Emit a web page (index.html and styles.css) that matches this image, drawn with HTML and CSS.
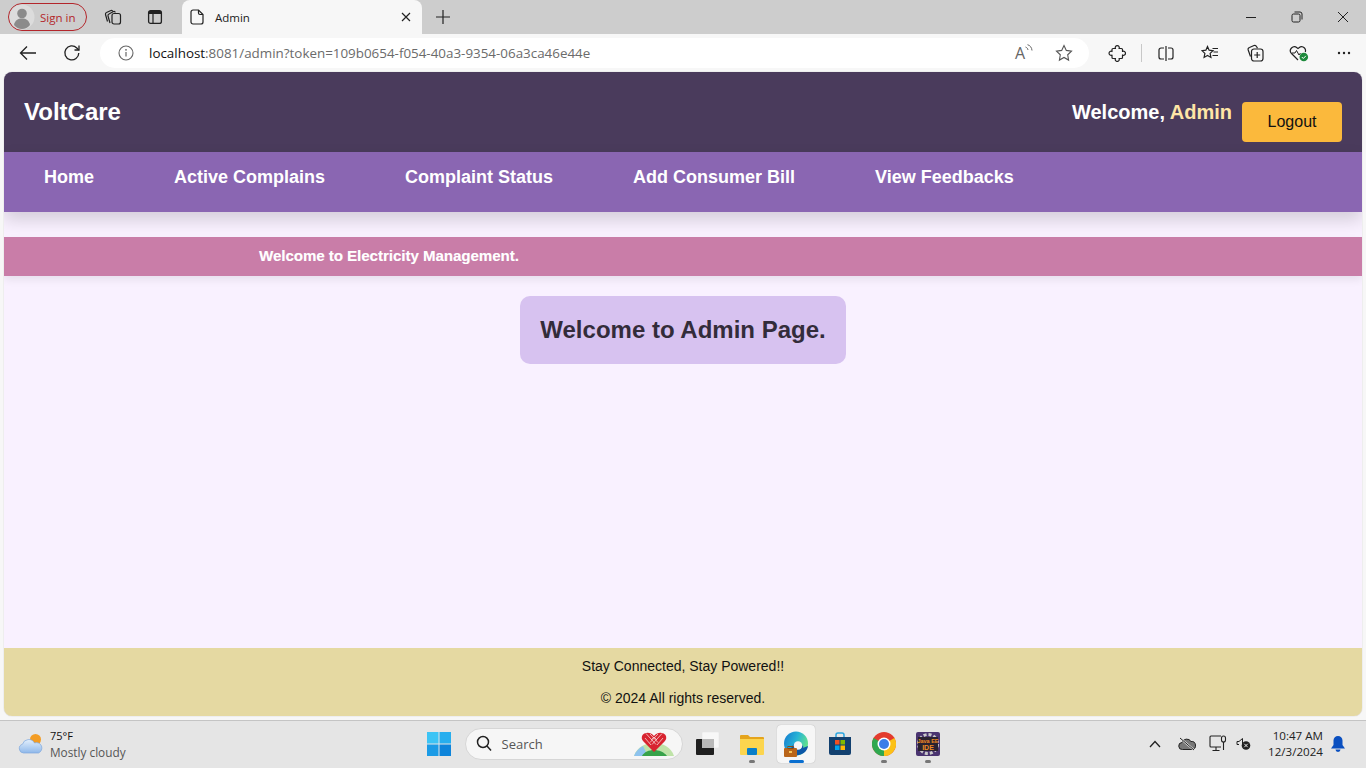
FILE: index.html
```html
<!DOCTYPE html>
<html lang="en">
<head>
  <meta charset="UTF-8" />
  <title>Admin</title>
  <link rel="stylesheet" href="styles.css">
</head>
<body>
  <div class="tabstrip">
    <div class="signin">
      <span class="avatar">
        <svg width="26" height="26" viewBox="0 0 26 26"><circle cx="13" cy="13" r="12.500" fill="#dcdcdc"/><circle cx="13" cy="9.500" r="4.800" fill="#8b8b8b"/><path d="M5 21c1-5 4-6.500 8-6.500s7 1.500 8 6.500c-2 2.500-5 4-8 4s-6-1.500-8-4z" fill="#8b8b8b"/></svg>
      </span>
      <span class="signin-text">Sign in</span>
    </div>
    <button class="strip-btn">
      <svg width="18" height="18" viewBox="0 0 18 18" fill="none" stroke="#222" stroke-width="1.200"><path d="M3.500 13.500 1.500 6.500q-.3-1.500 1-2L7 2.500q1.300-.4 1.800 1"/><path d="M6 15 4 8q-.3-1.500 1-2l4.500-2.500q1.300-.5 1.800 1"/><rect x="8" y="5.500" width="8.500" height="10.500" rx="2"/></svg>
    </button>
    <button class="strip-btn">
      <svg width="16" height="16" viewBox="0 0 16 16"><rect x="1.600" y="1.600" width="12.800" height="12.800" rx="2" fill="none" stroke="#222" stroke-width="1.300"/><path d="M2 2h12v3H2z" fill="#222"/><path d="M6 5v9" stroke="#222" stroke-width="1.200"/></svg>
    </button>
    <div class="tab">
      <svg width="14" height="16" viewBox="0 0 14 16" fill="none" stroke="#222" stroke-width="1.200"><path d="M3 1h5.500L13 5.500V13a2 2 0 0 1-2 2H3a2 2 0 0 1-2-2V3a2 2 0 0 1 2-2z"/><path d="M8.500 1v3A1.500 1.500 0 0 0 10 5.500h3"/></svg>
      <span class="tab-title">Admin</span>
      <svg class="tab-close" width="10" height="10" viewBox="0 0 10 10" stroke="#222" stroke-width="1.200"><path d="M1 1l8 8M9 1 1 9"/></svg>
    </div>
    <button class="strip-btn new-tab">
      <svg width="16" height="16" viewBox="0 0 16 16" stroke="#222" stroke-width="1.200"><path d="M8 1v14M1 8h14"/></svg>
    </button>
    <div class="win-btns">
      <svg width="12" height="12" viewBox="0 0 12 12" stroke="#222" stroke-width="1"><path d="M1 6.500h10"/></svg>
      <svg width="12" height="12" viewBox="0 0 12 12" fill="none" stroke="#222" stroke-width="1"><rect x="1" y="3" width="8" height="8" rx="1.500"/><path d="M3.500 1h5.500a2 2 0 0 1 2 2v5.500"/></svg>
      <svg width="12" height="12" viewBox="0 0 12 12" stroke="#222" stroke-width="1"><path d="M1 1l10 10M11 1 1 11"/></svg>
    </div>
  </div>

  <div class="toolbar">
    <button class="tool-btn back">
      <svg width="18" height="16" viewBox="0 0 18 16" fill="none" stroke="#222" stroke-width="1.300"><path d="M17 8H1.500M8 1.500 1.500 8 8 14.500"/></svg>
    </button>
    <button class="tool-btn reload">
      <svg width="18" height="18" viewBox="0 0 18 18" fill="none" stroke="#222" stroke-width="1.300"><path d="M15.800 9a7 7 0 1 1-2-5l2 2"/><path d="M16 1.500V6h-4.500"/></svg>
    </button>
    <div class="addressbar">
      <svg class="info" width="16" height="16" viewBox="0 0 16 16"><circle cx="8" cy="8" r="7" fill="none" stroke="#666" stroke-width="1.100"/><path d="M8 7v4.500" stroke="#666" stroke-width="1.200"/><circle cx="8" cy="4.800" r=".9" fill="#666"/></svg>
      <span class="url"><span class="url-host">localhost</span>:8081/admin?token=109b0654-f054-40a3-9354-06a3ca46e44e</span>
      <span class="read-aloud">
        <span class="read-a">A</span>
        <svg width="8" height="10" viewBox="0 0 8 10" fill="none" stroke="#666" stroke-width="1"><path d="M.5 3c1.500.5 2.300 1.700 2.500 3M2.500 .7C5 1.300 6.800 3.500 7 6.500"/></svg>
      </span>
      <svg class="star" width="18" height="18" viewBox="0 0 18 18" fill="none" stroke="#555" stroke-width="1.100"><path d="M9 1.500l2.300 4.900 5.200.7-3.800 3.700.9 5.300L9 13.500l-4.600 2.600.9-5.300L1.500 7.100l5.200-.7z"/></svg>
    </div>
    <div class="tool-icons">
      <span class="tool-slot">
        <svg width="18" height="18" viewBox="-1 -1 18 18" fill="none" stroke="#222" stroke-width="1.200" stroke-linejoin="round"><path d="M6.500 3.500A2 2 0 1 1 10 3.500H12.500a1 1 0 0 1 1 1V6.500A2 2 0 1 1 13.500 10V12.500a1 1 0 0 1-1 1H10A2 2 0 1 1 6.500 13.500H4a1 1 0 0 1-1-1V10A2 2 0 1 1 3 6.500V4.500a1 1 0 0 1 1-1z"/></svg>
      </span>
      <span class="tool-sep"></span>
      <span class="tool-slot">
        <svg width="16" height="15" viewBox="0 0 16 15" fill="none" stroke="#222" stroke-width="1.200"><path d="M6 2H3a2 2 0 0 0-2 2v7a2 2 0 0 0 2 2h3M10 2h3a2 2 0 0 1 2 2v7a2 2 0 0 1-2 2h-3M8 0v15"/></svg>
      </span>
      <span class="tool-slot">
        <svg width="18" height="16" viewBox="0 0 18 16" fill="none" stroke="#222" stroke-width="1.200"><path d="M6.500 1.500l1.600 3.700 3.900.5-2.900 2.700.8 4-3.400-2-3.400 2 .8-4L1 5.700l3.900-.5zM11.500 3.500H17M12.500 7H17M11.500 10.500H17"/></svg>
      </span>
      <span class="tool-slot">
        <svg width="18" height="18" viewBox="0 0 18 18" fill="none" stroke="#222" stroke-width="1.200"><path d="M4.500 12.500 2.200 6a2 2 0 0 1 1.300-2.500l4.500-2a2 2 0 0 1 2.500 1l1 1.800"/><rect x="5.500" y="5" width="11.500" height="12" rx="2.500"/><path d="M11.200 8v6M8.200 11h6"/></svg>
      </span>
      <span class="tool-slot">
        <svg width="20" height="18" viewBox="0 0 20 18"><path d="M9 16 2.500 9.500a4 4 0 0 1 0-5.500 4 4 0 0 1 5.500-.3L9 4.500l1-.8a4 4 0 0 1 5.500.3 4 4 0 0 1 .8 4" fill="none" stroke="#222" stroke-width="1.200"/><path d="M3 9h3l1.500-2.500L10 11l1.500-2" fill="none" stroke="#222" stroke-width="1"/><circle cx="14.800" cy="13" r="4.300" fill="#1e8a3c"/><path d="M12.800 13l1.500 1.500 2.500-2.600" fill="none" stroke="#fff" stroke-width="1"/></svg>
      </span>
      <span class="tool-slot">
        <svg width="14" height="4" viewBox="0 0 14 4" fill="#222"><circle cx="2" cy="2" r="1.200"/><circle cx="7" cy="2" r="1.200"/><circle cx="12" cy="2" r="1.200"/></svg>
      </span>
    </div>
  </div>

  <div class="viewport">
    <div class="app">
      <header class="topbar">
        <div class="brand">VoltCare</div>
        <div class="userbox">
          <span class="welcome">Welcome, <span class="username">Admin</span></span>
          <button class="logout">Logout</button>
        </div>
      </header>
      <nav class="navbar">
        <a href="#">Home</a>
        <a href="#">Active Complains</a>
        <a href="#">Complaint Status</a>
        <a href="#">Add Consumer Bill</a>
        <a href="#">View Feedbacks</a>
      </nav>
      <div class="ticker"><span>Welcome to Electricity Management.</span></div>
      <main class="content">
        <h2 class="greeting">Welcome to Admin Page.</h2>
      </main>
      <footer class="footer">
        <p>Stay Connected, Stay Powered!!</p>
        <p>&copy; 2024 All rights reserved.</p>
      </footer>
    </div>
  </div>

  <div class="taskbar">
    <div class="weather">
      <svg width="26" height="22" viewBox="0 0 26 22">
        <defs><linearGradient id="cloud" x1="0" y1="0" x2="0" y2="1"><stop offset="0" stop-color="#e3effc"/><stop offset="1" stop-color="#8fb8ea"/></linearGradient></defs>
        <circle cx="17.500" cy="6.500" r="5.500" fill="#f39c23"/>
        <path d="M5.500 20a4.500 4.500 0 0 1-1-8.800A6.500 6.500 0 0 1 16.500 10a5 5 0 0 1 4 10z" fill="url(#cloud)" stroke="#7ea8dc" stroke-width=".7"/>
      </svg>
      <div class="weather-text">
        <div class="temp">75°F</div>
        <div class="cond">Mostly cloudy</div>
      </div>
    </div>
    <div class="task-center">
      <svg class="win-logo" width="24" height="24" viewBox="0 0 24 24"><rect width="11.500" height="11.500" fill="#3cc4f5"/><rect x="12.500" width="11.500" height="11.500" fill="#27aeee"/><rect y="12.500" width="11.500" height="11.500" fill="#1b9be6"/><rect x="12.500" y="12.500" width="11.500" height="11.500" fill="#0e84da"/></svg>
      <div class="searchbox">
        <svg width="16" height="17" viewBox="0 0 16 17" fill="none" stroke="#222" stroke-width="1.500"><circle cx="7" cy="7" r="5.500"/><path d="M11 11l4 4.500"/></svg>
        <span class="search-text">Search</span>
        <svg class="search-art" width="40" height="24" viewBox="0 0 40 24">
          <path d="M0 24C3 15 11 11 20 11s17 4 20 13z" fill="#bfe3a8"/>
          <path d="M0 24c2-5 5-8 9-10l5 10z" fill="#8ec3ee"/>
          <path d="M8 24c2-4 7-6 12-6s10 2 13 6z" fill="#37a24a"/>
          <path d="M20 20 9.500 9.500a5.500 5.500 0 0 1-1-6.500c3-3 8-3 11.500 1 3.500-4 8.500-4 11.500-1a5.500 5.500 0 0 1-1 6.500z" fill="#d8232f"/>
          <path d="M12 1.500l10 11M16 2l8 8.500M20 5l3 3M28 1.500l-10 11M24 2l-8 8.500M20 5l-3 3M11 6l6 7M29 6l-6 7" stroke="#f7d6d6" stroke-width=".8" fill="none"/>
        </svg>
      </div>
      <div class="task-app">
        <svg width="24" height="24" viewBox="0 0 24 24"><rect x="6" y="0" width="17" height="16" rx="1" fill="#f7f7f7"/><rect x="6" y="0" width="17" height="16" rx="1" fill="none" stroke="#e0e0e0" stroke-width=".5"/><rect x="0" y="7" width="18" height="16" rx="1" fill="#1f1f1f"/><rect x="6" y="7" width="12" height="9" fill="#b9b9b9"/></svg>
      </div>
      <div class="task-app running">
        <svg width="24" height="22" viewBox="0 0 24 22"><path d="M0 3a1 1 0 0 1 1-1h7l2 2h13a1 1 0 0 1 1 1v16H0z" fill="#e5a41c"/><path d="M0 6h24v15a1 1 0 0 1-1 1H1a1 1 0 0 1-1-1z" fill="#fcd54e"/><rect x="7" y="15" width="10" height="7" rx="1" fill="#0a7fc9"/></svg>
      </div>
      <div class="task-app active">
        <svg width="26" height="26" viewBox="0 0 26 26">
          <defs><linearGradient id="edge" x1="0" y1="0" x2="1" y2=".4"><stop offset="0" stop-color="#1478cf"/><stop offset=".55" stop-color="#27b3d6"/><stop offset="1" stop-color="#5fe08f"/></linearGradient></defs>
          <circle cx="13" cy="12.500" r="12" fill="url(#edge)"/>
          <path d="M12 24.500C8 22 7 17 10 14c3-3 9-2 10 1 1 2-1 3-3 3l8-3c-1 6-6 9.500-13 9.500z" fill="#0c58a8"/>
          <circle cx="15" cy="14.500" r="4.300" fill="#f6f6f6"/>
          <rect x="1" y="17" width="13" height="9" rx="1" fill="#b9651a"/>
          <rect x="5" y="15.500" width="5" height="2" fill="none" stroke="#8a4a12"/>
          <rect x="6" y="20" width="3" height="2" fill="#f6c65b"/>
        </svg>
      </div>
      <div class="task-app">
        <svg width="22" height="24" viewBox="0 0 22 24"><path d="M7 5V3a2 2 0 0 1 2-2h4a2 2 0 0 1 2 2v2" fill="none" stroke="#2aa5e0" stroke-width="1.500"/><path d="M0 5h22v16a2 2 0 0 1-2 2H2a2 2 0 0 1-2-2z" fill="#12406f"/><rect x="6" y="8" width="4.500" height="4.500" fill="#f25022"/><rect x="11.500" y="8" width="4.500" height="4.500" fill="#7fba00"/><rect x="6" y="13.500" width="4.500" height="4.500" fill="#00a4ef"/><rect x="11.500" y="13.500" width="4.500" height="4.500" fill="#ffb900"/></svg>
      </div>
      <div class="task-app running">
        <svg width="24" height="24" viewBox="0 0 24 24"><circle cx="12" cy="12" r="12" fill="#e33b2e"/><path d="M12 12 22.400 6A12 12 0 0 1 12 24z" fill="#fbc116"/><path d="M12 12 12 24A12 12 0 0 1 1.600 6z" fill="#2fa84f"/><circle cx="12" cy="12" r="6.500" fill="#fff"/><circle cx="12" cy="12" r="5" fill="#3b7de8"/></svg>
      </div>
      <div class="task-app running">
        <svg width="24" height="24" viewBox="0 0 24 24"><rect width="24" height="24" rx="2" fill="#4a3470"/><circle cx="12" cy="12" r="9.500" fill="none" stroke="#c9c9c9" stroke-width="3" stroke-dasharray="3 2"/><rect x="2" y="5" width="20" height="14" fill="#2a2230"/><text x="12" y="10.500" class="ide-label" text-anchor="middle">Java EE</text><text x="12" y="17.500" class="ide-label ide-big" text-anchor="middle">IDE</text></svg>
      </div>
    </div>
    <div class="tray">
      <svg width="12" height="8" viewBox="0 0 12 8" fill="none" stroke="#222" stroke-width="1.300"><path d="M1 7l5-5.500L11 7"/></svg>
      <svg class="tray-cloud" width="18" height="14" viewBox="0 0 18 14"><path d="M4.500 12.500a3.500 3.500 0 0 1-.5-7A5 5 0 0 1 13 4.500a3.500 3.500 0 0 1 1 8z" fill="#777" stroke="#222"/><path d="M2 1l14 12" stroke="#e8e8e8" stroke-width="2"/><path d="M2 1l14 12" stroke="#222" stroke-width="1"/></svg>
      <svg class="tray-net" width="18" height="17" viewBox="0 0 18 17" fill="none" stroke="#222" stroke-width="1.100"><path d="M12 1H2a1 1 0 0 0-1 1v9a1 1 0 0 0 1 1h10M7 12v3M3.500 15.500h7"/><rect x="12.500" y="1" width="4" height="6" rx="2"/><path d="M14.500 7v8"/></svg>
      <svg class="tray-vol" width="15" height="13" viewBox="0 0 15 13"><path d="M1 4.500h2L6.500 1.500v6" fill="none" stroke="#222"/><path d="M1 4.500v3h2" fill="none" stroke="#222"/><circle cx="10" cy="8.500" r="4.300" fill="#222"/><path d="M8.300 6.800l3.400 3.400m0-3.400L8.300 10.200" stroke="#eee" stroke-width="1"/></svg>
      <div class="clock">
        <div>10:47 AM</div>
        <div>12/3/2024</div>
      </div>
      <svg class="bell" width="14" height="16" viewBox="0 0 14 16" fill="#0a4fc0"><path d="M7 0a4.500 4.500 0 0 1 4.500 4.500V9l2.500 3.500H0L2.500 9V4.500A4.500 4.500 0 0 1 7 0z"/><path d="M4.500 13.500h5a2.500 2.500 0 0 1-5 0z"/></svg>
    </div>
  </div>
</body>
</html>
```

FILE: styles.css
```css
* {
  margin: 0;
  padding: 0;
  box-sizing: border-box;
}

html, body {
  height: 100%;
  overflow: hidden;
}

body {
  width: 1366px;
  height: 768px;
  display: flex;
  flex-direction: column;
  font-family: "Liberation Sans", Arial, sans-serif;
  background: #f7f7f7;
}

svg {
  display: block;
  flex: none;
}

button {
  border: none;
  background: none;
  font-family: inherit;
}

/* browser frame */
.tabstrip {
  height: 34px;
  background: #cdcdcd;
  display: flex;
  align-items: flex-end;
  padding-left: 8px;
  flex: none;
}

.signin {
  width: 79px;
  height: 28px;
  margin-bottom: 3px;
  border: 1px solid #b3262b;
  border-radius: 14px;
  display: flex;
  align-items: center;
  gap: 5px;
  overflow: hidden;
}

.signin-text {
  font-family: "Open Sans", sans-serif;
  font-size: 11.500px;
  color: #b3262b;
}

.strip-btn {
  width: 42px;
  height: 34px;
  display: flex;
  align-items: center;
  justify-content: center;
}

.strip-btn:first-of-type {
  margin-left: 5px;
}

.tab {
  width: 240px;
  height: 34px;
  margin-left: 6px;
  background: #f7f7f7;
  border-radius: 8px 8px 0 0;
  display: flex;
  align-items: center;
  padding: 0 11px 0 8px;
  gap: 11px;
}

.tab-title {
  font-family: "Open Sans", sans-serif;
  font-size: 11.500px;
  color: #222;
  flex: 1;
}

.new-tab {
  width: 38px;
  margin-left: 2px;
}

.win-btns {
  margin-left: auto;
  height: 34px;
  width: 137px;
  display: flex;
  align-items: center;
  justify-content: space-between;
  padding: 0 17px 0 16px;
}

.toolbar {
  height: 38px;
  flex: none;
  display: flex;
  align-items: center;
  background: #f7f7f7;
}

.tool-btn {
  width: 44px;
  height: 30px;
  display: flex;
  align-items: center;
  justify-content: center;
}

.back {
  margin-left: 6px;
}

.addressbar {
  width: 989px;
  height: 30px;
  margin-left: 6px;
  background: #fff;
  border-radius: 15px;
  display: flex;
  align-items: center;
  padding: 0 16px 0 18px;
}

.url {
  margin-left: 15px;
  font-family: "Open Sans", sans-serif;
  font-size: 13.400px;
  color: #6b6b6b;
  flex: 1;
  white-space: nowrap;
}

.url-host {
  color: #111;
}

.read-aloud {
  display: flex;
  align-items: flex-start;
  margin-right: 22px;
}

.read-a {
  font-family: "Open Sans", sans-serif;
  font-size: 16px;
  line-height: 18px;
  color: #666;
}

.tool-icons {
  display: flex;
  align-items: center;
  margin-left: 6px;
}

.tool-slot {
  width: 44.500px;
  height: 30px;
  display: flex;
  align-items: center;
  justify-content: center;
}

.tool-sep {
  width: 1px;
  height: 18px;
  background: #c8c8c8;
  margin: 0 1.500px;
}

/* page */
.viewport {
  height: 648px;
  flex: none;
  padding: 0 4px;
  background: #f7f7f7;
}

.app {
  height: 644px;
  border-radius: 8px;
  overflow: hidden;
  background: #f9f1ff;
  display: flex;
  flex-direction: column;
  box-shadow: 0 0 1px rgba(0, 0, 0, 0.35);
}

.topbar {
  height: 80px;
  flex: none;
  background: #4a3b5c;
  display: flex;
  align-items: center;
  justify-content: space-between;
  padding: 0 20px;
}

.brand {
  font-size: 24px;
  font-weight: bold;
  color: #fff;
}

.userbox {
  display: flex;
  align-items: center;
  gap: 10px;
}

.welcome {
  font-size: 20px;
  font-weight: bold;
  color: #fff;
}

.username {
  color: #ffe6a7;
}

.logout {
  width: 100px;
  height: 40px;
  margin-top: 20px;
  background: #fbb93c;
  border-radius: 4px;
  font-size: 16px;
  color: #111;
}

.navbar {
  height: 60px;
  flex: none;
  background: #8a66b2;
  display: flex;
  gap: 80px;
  padding: 0 40px 10px;
  align-items: center;
  box-shadow: 0 8px 16px rgba(0, 0, 0, 0.15);
  position: relative;
}

.navbar a {
  font-size: 18px;
  font-weight: bold;
  color: #fff;
  text-decoration: none;
}

.ticker {
  margin-top: 25px;
  height: 39px;
  flex: none;
  background: #c97da8;
  display: flex;
  align-items: center;
  padding: 0 0 2px 255px;
  box-shadow: 0 4px 8px rgba(0, 0, 0, 0.07);
  position: relative;
}

.ticker span {
  font-size: 15px;
  font-weight: bold;
  color: #fff;
  text-shadow: 0.4px 0 0 rgba(255, 255, 255, 0.4);
}

.content {
  flex: 1;
  display: flex;
  justify-content: center;
  align-items: flex-start;
  padding-top: 20px;
}

.greeting {
  background: #d7c2f0;
  color: #332c3a;
  font-size: 24px;
  font-weight: bold;
  padding: 20px;
  border-radius: 10px;
  line-height: 28px;
}

.footer {
  height: 68px;
  flex: none;
  background: #e5d9a2;
  font-size: 14px;
  color: #111;
  text-align: center;
  padding-top: 10px;
  display: flex;
  flex-direction: column;
  gap: 16px;
}

.footer p {
  line-height: 16px;
}

/* windows taskbar */
.taskbar {
  height: 48px;
  flex: none;
  background: #e5e5e5;
  border-top: 1px solid #c4c4c4;
  display: flex;
  align-items: center;
  padding: 0 0 2px 18px;
}

.weather {
  display: flex;
  align-items: center;
  gap: 6px;
}

.weather-text {
  font-family: "Open Sans", sans-serif;
  font-size: 11px;
  line-height: 16px;
}

.temp {
  color: #111;
}

.cond {
  color: #555;
  font-size: 11.800px;
}

.task-center {
  display: flex;
  align-items: center;
  margin-left: 301px;
}

.searchbox {
  width: 218px;
  height: 32px;
  margin-left: 14px;
  border-radius: 16px;
  background: #f6f6f6;
  border: 1px solid #d6d6d6;
  display: flex;
  align-items: center;
  padding: 0 8px 0 10px;
  gap: 10px;
  overflow: hidden;
}

.search-text {
  font-family: "Open Sans", sans-serif;
  font-size: 13px;
  color: #555;
  flex: 1;
}

.search-art {
  align-self: flex-end;
  margin-bottom: 3px;
}

.task-app {
  width: 38px;
  height: 38px;
  margin-left: 6px;
  display: flex;
  align-items: center;
  justify-content: center;
  position: relative;
  border-radius: 4px;
}

.task-app.running::after,
.task-app.active::after {
  content: "";
  position: absolute;
  bottom: 0;
  left: 50%;
  width: 6px;
  height: 3px;
  margin-left: -3px;
  border-radius: 2px;
  background: #777;
}

.task-app.active {
  background: #f6f6f6;
  box-shadow: 0 0 1px rgba(0, 0, 0, 0.3);
}

.task-app.active::after {
  width: 15px;
  margin-left: -7px;
  background: #0a6fd0;
}

.tray {
  margin-left: auto;
  display: flex;
  align-items: center;
  padding-right: 21px;
}

.tray-cloud {
  margin-left: 17px;
}

.tray-net {
  margin-left: 13px;
}

.tray-vol {
  margin-left: 9px;
}

.clock {
  margin-left: 17px;
  font-family: "Open Sans", sans-serif;
  font-size: 11.600px;
  line-height: 16px;
  text-align: right;
  color: #222;
}

.bell {
  margin-left: 8px;
}

.ide-label {
  font-family: "Liberation Sans", sans-serif;
  font-size: 5.500px;
  font-weight: bold;
  fill: #f08a24;
}

.ide-big {
  font-size: 7px;
}
```
